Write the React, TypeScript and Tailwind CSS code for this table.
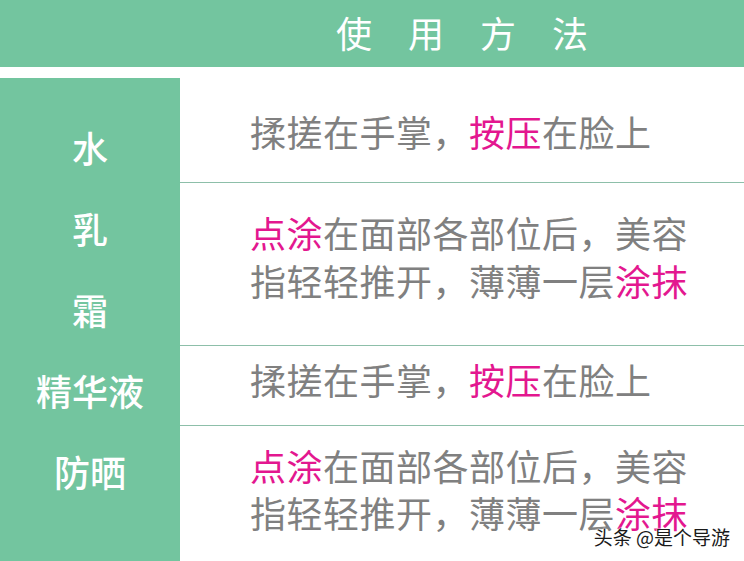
const FONT = "font-['Noto_Sans_CJK_SC','Noto_Sans',sans-serif]";

const LABELS = ['水', '乳', '霜', '精华液', '防晒'];

function Pink({ children }: { children: React.ReactNode }) {
  return <span className="text-[#e3178f]">{children}</span>;
}

function Press() {
  return (
    <p>
      揉搓在手掌，<Pink>按压</Pink>在脸上
    </p>
  );
}

function Spread() {
  return (
    <>
      <p>
        <Pink>点涂</Pink>在面部各部位后，美容
      </p>
      <p>
        指轻轻推开，薄薄一层<Pink>涂抹</Pink>
      </p>
    </>
  );
}

export default function App() {
  return (
    <div className={`relative w-[744px] h-[561px] overflow-hidden bg-white ${FONT}`}>
      <div className="h-[67px] bg-[#73c59f] flex items-center justify-center pl-[180px] pb-[4px] gap-[36px] text-[36px] leading-none text-white">
        <span>使</span>
        <span>用</span>
        <span>方</span>
        <span>法</span>
      </div>

      <div className="mt-[11px] flex h-[483px]">
        <div className="w-[180px] shrink-0 bg-[#73c59f] flex flex-col items-center pt-[29px] text-[36px] leading-[81px] font-medium text-white">
          {LABELS.map((l) => (
            <span key={l}>{l}</span>
          ))}
        </div>

        <div className="flex-1 flex flex-col text-[36px] tracking-[0.5px] text-[#808080] [&>div]:pl-[70px]">
          <div className="h-[105px] pt-[29px] leading-[48px] border-b border-[#8dbfa9]">
            <Press />
          </div>
          <div className="h-[163px] pt-[25px] leading-[48px] border-b border-[#8dbfa9]">
            <Spread />
          </div>
          <div className="h-[80px] pt-[9px] leading-[48px] border-b border-[#8dbfa9]">
            <Press />
          </div>
          <div className="flex-1 pt-[16px] leading-[47px]">
            <Spread />
          </div>
        </div>
      </div>

      <div className="absolute right-[14px] bottom-[15px] text-[19px] leading-none text-[#1a1a1a] [text-shadow:0_0_2px_#fff,0_0_2px_#fff,0_0_1px_#fff]">
        头条 @是个导游
      </div>
    </div>
  );
}
